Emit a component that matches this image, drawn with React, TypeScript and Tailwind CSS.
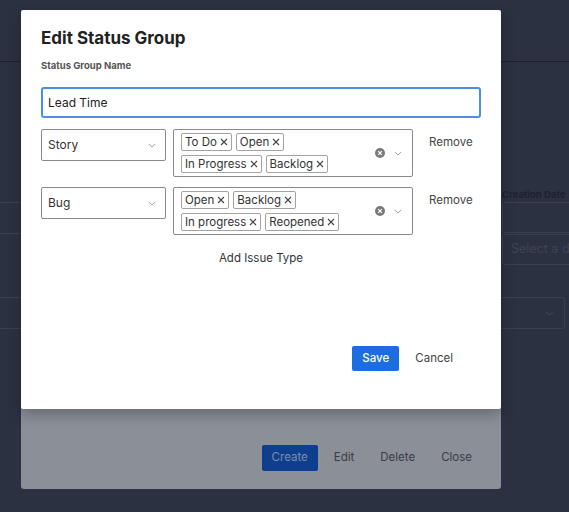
import React, { useState } from 'react';

type Row = { id: number; type: string; statuses: string[] };

const font = { fontFamily: 'Inter, "Liberation Sans", sans-serif' };

const Chevron: React.FC<{ className?: string }> = ({ className }) => (
  <svg viewBox="0 0 10 6" className={className} fill="none" stroke="currentColor" strokeWidth="1">
    <path d="M1 1l4 4 4-4" />
  </svg>
);

const SmallX: React.FC = () => (
  <svg viewBox="0 0 8 8" className="w-[8px] h-[8px]" fill="none" stroke="currentColor" strokeWidth="1.1">
    <path d="M1 1l6 6M7 1l-6 6" />
  </svg>
);

const ClearIcon: React.FC = () => (
  <svg viewBox="0 0 10 10" className="w-[10px] h-[10px]">
    <circle cx="5" cy="5" r="5" fill="#7a7a7a" />
    <path d="M3.2 3.2l3.6 3.6M6.8 3.2l-3.6 3.6" stroke="#fff" strokeWidth="1.2" />
  </svg>
);

const Chip: React.FC<{ label: string; onRemove: () => void }> = ({ label, onRemove }) => (
  <span className="flex items-center gap-[3px] h-[18px] px-[3px] border border-[#a3a3a3] rounded-[2px] text-[11.5px] leading-[16px] text-[#333]">
    {label}
    <button onClick={onRemove} className="text-[#444] flex items-center">
      <SmallX />
    </button>
  </span>
);

const App: React.FC = () => {
  const [name, setName] = useState('Lead Time');
  const [rows, setRows] = useState<Row[]>([
    { id: 1, type: 'Story', statuses: ['To Do', 'Open', 'In Progress', 'Backlog'] },
    { id: 2, type: 'Bug', statuses: ['Open', 'Backlog', 'In progress', 'Reopened'] },
  ]);

  const removeStatus = (id: number, s: string) =>
    setRows(rows.map((r) => (r.id === id ? { ...r, statuses: r.statuses.filter((x) => x !== s) } : r)));

  return (
    <div className="relative w-[569px] h-[512px] overflow-hidden bg-[#2c3142]" style={font}>
      {/* page behind the dialogs */}
      <div className="h-[62px] border-b border-[#1d212c]" />
      <div className="flex mt-[125px] gap-[12px] -ml-[4px]">
        <div className="w-[494px] shrink-0 mt-[15px] h-[32px] border border-[#3a4050] rounded-[3px]" />
        <div className="w-[90px] shrink-0 flex flex-col">
          <span className="text-[9.5px] font-bold text-[#1d2130] leading-[15px] whitespace-nowrap">Creation Date</span>
          <div className="h-[31px] border border-[#3a4050] rounded-[3px]" />
          <div className="h-[31px] mt-[1px] border border-[#3a4050] rounded-[3px] flex items-center px-[8px] text-[12.5px] text-[#3e4454] whitespace-nowrap">
            Select a date
          </div>
        </div>
      </div>
      <div className="-ml-[4px] mt-[32px] w-[569px] h-[32px] border border-[#3a4050] rounded-[3px] flex items-center justify-end pr-[10px] text-[#4a5062]">
        <Chevron className="w-[9px] h-[5px]" />
      </div>

      {/* first dialog, dimmed */}
      <div className="absolute left-[21px] top-[40px] w-[480px] h-[449px] bg-[#8b8f98] rounded-[3px] flex flex-col justify-end">
        <div className="flex justify-end items-center pr-[16px] pb-[18px] text-[11.5px] text-[#3a3d45]">
          <button className="h-[26px] px-[10px] bg-[#0e3e8e] text-[#7d8cab] rounded-[2px] mr-[3px]">Create</button>
          <button className="h-[26px] px-[13px]">Edit</button>
          <button className="h-[26px] px-[13px]">Delete</button>
          <button className="h-[26px] px-[13px]">Close</button>
        </div>
      </div>

      {/* edit dialog */}
      <div className="absolute left-[21px] top-[10px] w-[480px] h-[399px] bg-white rounded-[2px] shadow-[0_6px_14px_rgba(0,0,0,0.25)] flex flex-col px-[20px] pt-[17px]">
        <h2 className="text-[17px] leading-[22px] font-bold text-[#222]">Edit Status Group</h2>
        <label className="mt-[10px] text-[9.5px] leading-[14px] font-bold text-[#555]">Status Group Name</label>
        <input
          value={name}
          onChange={(e) => setName(e.target.value)}
          className="mt-[14px] h-[31px] border-2 border-[#4a8fe6] rounded-[3px] px-[5px] text-[12px] text-[#222] outline-none"
        />
        <div className="mt-[11px] flex flex-col gap-[10px]">
          {rows.map((r) => (
            <div key={r.id} className="flex items-start">
              <div className="w-[125px] h-[32px] border border-[#8a8a8a] rounded-[2px] flex items-center justify-between pl-[6px] pr-[9px] text-[12px] text-[#333]">
                {r.type}
                <Chevron className="w-[8px] h-[5px] text-[#888]" />
              </div>
              <div className="ml-[7px] w-[240px] h-[48px] border border-[#8a8a8a] rounded-[2px] flex items-center pl-[7px] pr-[10px]">
                <div className="flex-1 flex flex-col gap-[4px]">
                  {[r.statuses.slice(0, 2), r.statuses.slice(2)].map((line, i) => (
                    <div key={i} className="flex gap-[4px]">
                      {line.map((s) => (
                        <Chip key={s} label={s} onRemove={() => removeStatus(r.id, s)} />
                      ))}
                    </div>
                  ))}
                </div>
                <ClearIcon />
                <Chevron className="ml-[9px] w-[8px] h-[5px] text-[#888]" />
              </div>
              <button
                onClick={() => setRows(rows.filter((x) => x.id !== r.id))}
                className="ml-[16px] pt-[5px] text-[11.5px] leading-[16px] text-[#444]"
              >
                Remove
              </button>
            </div>
          ))}
        </div>
        <button className="mt-[15px] self-center text-[11.5px] leading-[16px] text-[#333]">Add Issue Type</button>
        <div className="mt-auto mb-[38px] flex justify-end items-center pr-[15px] text-[11.5px]">
          <button className="h-[25px] px-[10px] bg-[#1b6de0] text-white font-medium rounded-[2px]">Save</button>
          <button className="h-[25px] px-[13px] ml-[3px] text-[#444]">Cancel</button>
        </div>
      </div>
    </div>
  );
};

export default App;
